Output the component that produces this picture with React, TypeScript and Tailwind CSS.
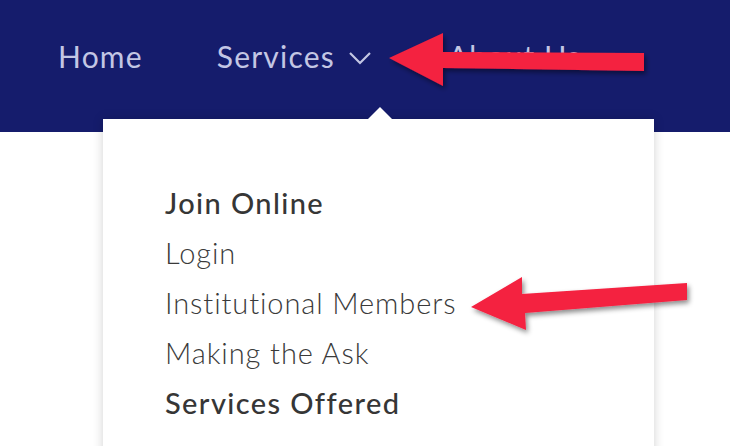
import React from "react";

const Arrows = () => (
  <svg className="absolute left-0 top-0 pointer-events-none" width="730" height="446" viewBox="0 0 730 446">
    <defs>
      <filter id="sh" x="-10%" y="-30%" width="130%" height="180%">
        <feDropShadow dx="2" dy="3" stdDeviation="2.5" floodColor="#000" floodOpacity="0.45" />
      </filter>
    </defs>
    <polygon
      points="389,58 443,33 443,52 644,53 644,71 443,68 443,86"
      fill="#f42040"
      filter="url(#sh)"
    />
    <polygon
      points="471,307 522,277 522,294 687,283 687,300 525,313 526,330"
      fill="#f42040"
      filter="url(#sh)"
    />
  </svg>
);

export default function App() {
  const font = { fontFamily: "Lato, 'Open Sans', sans-serif" };
  return (
    <div className="relative w-[730px] h-[446px] overflow-hidden bg-white" style={font}>
      <header className="h-[132px] bg-[#151c6c] flex items-start pt-[37px] pl-[58px]">
        <nav className="flex items-center gap-[74px] text-[30px] leading-[38px] tracking-[1.2px] text-[#c3c6e4]">
          <span>Home</span>
          <span className="flex items-center gap-[13px]">
            Services
            <svg width="24" height="14" viewBox="0 0 24 14" className="mt-[3px]">
              <polyline points="2,2 12,12 22,2" fill="none" stroke="#c3c6e4" strokeWidth="2.2" />
            </svg>
          </span>
          <span className="ml-[2px]">About Us</span>
        </nav>
      </header>

      <div className="absolute left-[103px] top-[119px] w-[551px] h-[340px] bg-white shadow-[0_0_10px_rgba(0,0,0,0.18)]">
        <div className="absolute left-[265px] -top-[12px] w-0 h-0 border-l-[12px] border-r-[12px] border-b-[12px] border-l-transparent border-r-transparent border-b-white" />
        <ul className="pl-[62px] pt-[59px] text-[29px] leading-[50px] tracking-[0.9px] text-[#363636]">
          <li className="font-medium tracking-[1.4px]">Join Online</li>
          <li className="font-light text-[#3a3a3a]">Login</li>
          <li className="font-light text-[#3a3a3a]">Institutional Members</li>
          <li className="font-light text-[#3a3a3a]">Making the Ask</li>
          <li className="font-medium tracking-[1.4px]">Services Offered</li>
        </ul>
      </div>

      <Arrows />
    </div>
  );
}
